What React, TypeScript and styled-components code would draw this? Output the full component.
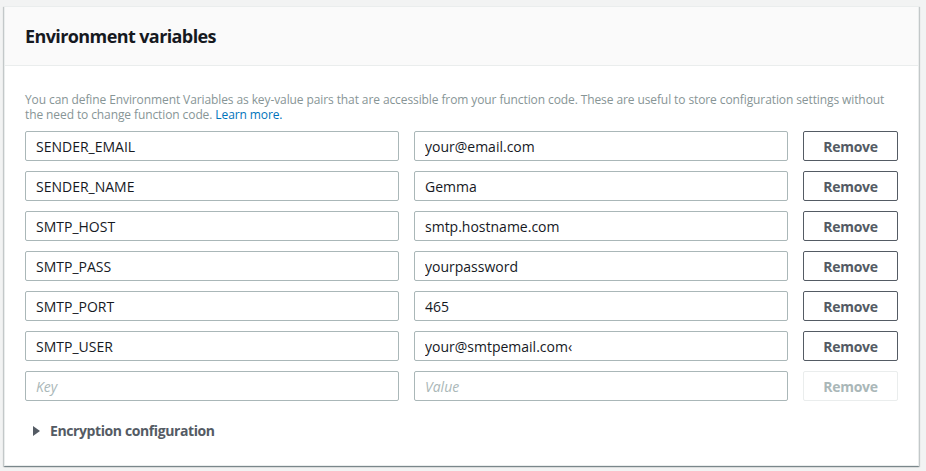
import React from "react";
import styled, { createGlobalStyle } from "styled-components";

const GlobalStyle = createGlobalStyle`
  html, body {
    margin: 0;
    padding: 0;
    background: #f2f3f3;
  }
  body {
    font-family: "Open Sans", Lato, sans-serif;
    -webkit-font-smoothing: antialiased;
  }
  * { box-sizing: border-box; }
`;

const Page = styled.div`
  padding: 6px 7px 0 4px;
  width: 926px;
  height: 471px;
`;

const Card = styled.section`
  background: #ffffff;
  border: 1px solid #eaeded;
  box-shadow: 0 1px 1px 0 rgba(0, 28, 36, 0.3), 1px 1px 1px 0 rgba(0, 28, 36, 0.15),
    -1px 1px 1px 0 rgba(0, 28, 36, 0.15);
  height: 460px;
`;

const Header = styled.header`
  background: #fafafa;
  border-bottom: 1px solid #eaeded;
  height: 59px;
  display: flex;
  align-items: center;
  padding: 0 20px;
`;

const Title = styled.h2`
  margin: 0;
  font-size: 18px;
  font-weight: 700;
  color: #16191f;
  letter-spacing: -0.6px;
`;

const Body = styled.div`
  padding: 26px 20px 0 20px;
  display: flex;
  flex-direction: column;
`;

const Description = styled.p`
  margin: 0 0 9px 0;
  font-size: 12px;
  line-height: 15px;
  color: #879596;
  letter-spacing: -0.1px;
`;

const Link = styled.a`
  color: #0073bb;
  text-decoration: none;
`;

const Rows = styled.div`
  display: flex;
  flex-direction: column;
  gap: 10px;
`;

const Row = styled.div`
  display: grid;
  grid-template-columns: 374px 374px 95px;
  column-gap: 15px;
`;

const Field = styled.input`
  height: 30px;
  border: 1px solid #aab7b8;
  border-radius: 2px;
  padding: 0 10px;
  font-family: inherit;
  font-size: 14px;
  color: #16191f;
  background: #fff;
  outline: none;
  &::placeholder {
    color: #aab7b8;
    font-style: italic;
  }
`;

const RemoveButton = styled.button<{ $disabled?: boolean }>`
  height: 30px;
  border: 1px solid ${(p) => (p.$disabled ? "#eaeded" : "#545b64")};
  border-radius: 2px;
  background: #fff;
  color: ${(p) => (p.$disabled ? "#aab7b8" : "#545b64")};
  font-family: inherit;
  font-size: 14px;
  font-weight: 700;
  letter-spacing: -0.3px;
  padding: 0;
  cursor: ${(p) => (p.$disabled ? "default" : "pointer")};
`;

const Expander = styled.div`
  display: flex;
  align-items: center;
  gap: 10px;
  margin-top: 20px;
  padding-left: 8px;
  font-size: 14px;
  font-weight: 700;
  color: #545b64;
  letter-spacing: -0.4px;
`;

const Caret = styled.span`
  width: 0;
  height: 0;
  border-top: 5px solid transparent;
  border-bottom: 5px solid transparent;
  border-left: 7px solid #545b64;
`;

const vars: [string, string][] = [
  ["SENDER_EMAIL", "your@email.com"],
  ["SENDER_NAME", "Gemma"],
  ["SMTP_HOST", "smtp.hostname.com"],
  ["SMTP_PASS", "yourpassword"],
  ["SMTP_PORT", "465"],
  ["SMTP_USER", "your@smtpemail.com‹"],
];

export default function App() {
  return (
    <>
      <GlobalStyle />
      <Page>
        <Card>
          <Header>
            <Title>Environment variables</Title>
          </Header>
          <Body>
            <Description>
              You can define Environment Variables as key-value pairs that are accessible from your
              function code. These are useful to store configuration settings without the need to
              change function code. <Link href="#">Learn more.</Link>
            </Description>
            <Rows>
              {vars.map(([k, v]) => (
                <Row key={k}>
                  <Field defaultValue={k} />
                  <Field defaultValue={v} />
                  <RemoveButton>Remove</RemoveButton>
                </Row>
              ))}
              <Row>
                <Field placeholder="Key" />
                <Field placeholder="Value" />
                <RemoveButton $disabled disabled>
                  Remove
                </RemoveButton>
              </Row>
            </Rows>
            <Expander>
              <Caret />
              Encryption configuration
            </Expander>
          </Body>
        </Card>
      </Page>
    </>
  );
}
